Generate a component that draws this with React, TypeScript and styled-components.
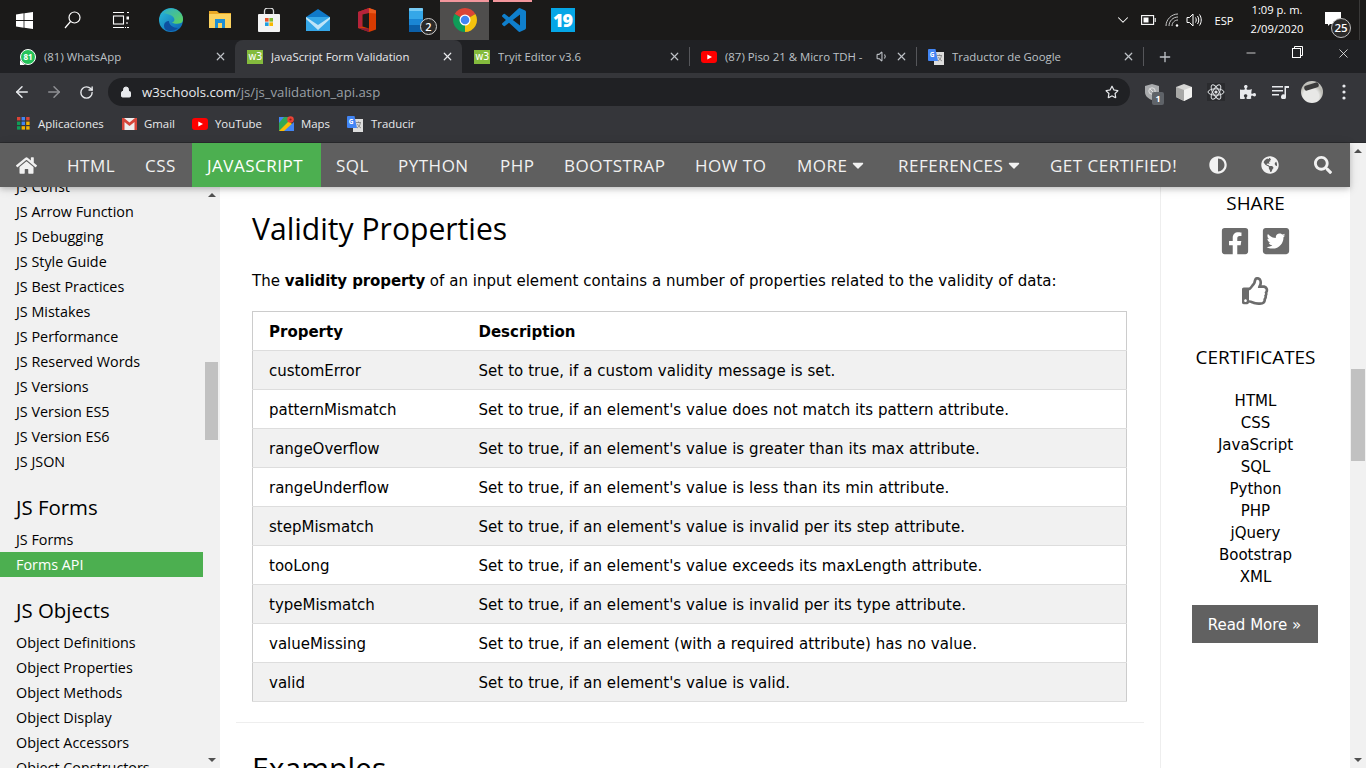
import React from 'react';
import styled, { createGlobalStyle } from 'styled-components';
import { FaHome, FaCaretDown, FaAdjust, FaGlobeAmericas, FaSearch, FaFacebookSquare, FaTwitterSquare, FaRegThumbsUp, FaPuzzlePiece, FaRegStar } from 'react-icons/fa';
import { ArrowLeft, ArrowRight, RotateCw, Lock, X, Plus, Minus, ChevronDown, Volume1 } from 'lucide-react';

const UI = '"Open Sans", "Noto Sans", sans-serif';
const VERD = '"DejaVu Sans", Verdana, sans-serif';

const Global = createGlobalStyle`
  html, body { margin: 0; padding: 0; background: #fff; overflow: hidden; }
  #root { width: 1366px; height: 768px; overflow: hidden; }
  * { box-sizing: border-box; }
`;

const Screen = styled.div`
  width: 1366px; height: 768px; display: flex; flex-direction: column; overflow: hidden; font-family: ${UI};
`;

/* ---------- taskbar ---------- */
const Taskbar = styled.div`
  height: 40px; flex: none; display: flex; align-items: stretch; background: #1b1a19; color: #fff;
`;
const SysButton = styled.div`
  width: 48px; display: flex; align-items: center; justify-content: center;
`;
const Spacer = styled.div<{ $w: number }>`
  width: ${p => p.$w}px; flex: none;
`;
const Grow = styled.div`
  flex: 1;
`;
const AppButton = styled.div<{ $active?: boolean; $running?: boolean }>`
  width: 49px; position: relative; display: flex; align-items: center; justify-content: center;
  background: ${p => (p.$active ? '#4f4e4d' : 'transparent')};
  &::before {
    content: ''; position: absolute; top: 0; height: 2px; background: #f2969c;
    left: ${p => (p.$active ? '0' : '4px')}; right: ${p => (p.$active ? '0' : '6px')};
    display: ${p => (p.$running ? 'block' : 'none')};
  }
`;
const CountBadge = styled.span`
  position: absolute; left: 29px; top: 18px; width: 17px; height: 17px; border-radius: 50%;
  background: #2b2a29; border: 1px solid #cfcfcf; color: #fff; font: 600 11px/15px ${UI}; text-align: center;
`;
const Tray = styled.div`
  display: flex; align-items: center; color: #fff; height: 40px; padding-right: 6px;
`;
const TrayIcon = styled.div<{ $w: number }>`
  width: ${p => p.$w}px; display: flex; justify-content: center; align-items: center; height: 40px;
`;
const TrayLang = styled.div`
  width: 36px; padding-left: 4px; text-align: center; font-size: 11.2px; color: #fff;
`;
const Clock = styled.div`
  width: 74px; text-align: center; font-size: 11.2px; line-height: 19px; color: #fff; padding-bottom: 2px;
`;
const Notif = styled.div`
  width: 46px; height: 40px; position: relative; border-right: 1px solid #3a3938;
  display: flex; align-items: flex-start; justify-content: flex-start;
`;
const NotifGlyph = styled.svg`
  margin: 12px 0 0 11px;
`;
const NotifBadge = styled.span`
  position: absolute; left: 17px; top: 18px; width: 20px; height: 20px; border-radius: 50%;
  background: #2b2a29; border: 1px solid #bdbdbd; color: #fff; font: 600 11.5px/18px ${UI}; text-align: center;
`;

/* ---------- tabs ---------- */
const TabStrip = styled.div`
  height: 33px; flex: none; background: #202124; display: flex; align-items: stretch; padding-left: 8px;
`;
const Tab = styled.div<{ $active?: boolean; $sep?: boolean }>`
  width: 227px; flex: none; position: relative; display: flex; align-items: center; padding: 0 8px 0 12px;
  background: ${p => (p.$active ? '#35363a' : 'transparent')};
  border-radius: 8px 8px 0 0;
  color: ${p => (p.$active ? '#e8eaed' : '#bdc1c6')};
  &::before {
    content: ''; position: absolute; left: 0; top: 7px; height: 19px; width: 1px; background: #55565a;
    display: ${p => (p.$sep ? 'block' : 'none')};
  }
`;
const TabIconSlot = styled.div`
  width: 16px; height: 16px; flex: none; display: flex; align-items: center; justify-content: center; position: relative;
`;
const TabTitle = styled.div`
  flex: 1; margin-left: 8px; font-size: 11.4px; white-space: nowrap; overflow: hidden;
`;
const W3Icon = styled.div`
  width: 16px; height: 14px; background: #84bb3d; color: #fff; font: 400 10px/13px ${VERD}; text-align: center; letter-spacing: -.5px;
`;
const WaIcon = styled.div`
  width: 16px; height: 16px; border-radius: 50%; background: #25c35a; color: #fff; border: 1px solid #fff;
  font: 700 8px/14px ${UI}; text-align: center; position: relative;
  &::after {
    content: ''; position: absolute; left: -1px; bottom: -1px; width: 0; height: 0;
    border-left: 5px solid #fff; border-top: 5px solid transparent;
  }
`;
const NewTab = styled.div`
  width: 44px; position: relative; display: flex; align-items: center; justify-content: center; color: #bdc1c6;
  &::before { content: ''; position: absolute; left: 0; top: 7px; height: 19px; width: 1px; background: #55565a; }
`;
const WinBtn = styled.div`
  width: 46px; height: 33px; display: flex; align-items: flex-start; padding-top: 6px; justify-content: center; color: #fff;
`;

/* ---------- toolbar ---------- */
const Toolbar = styled.div`
  height: 37px; flex: none; background: #35363a; display: flex; align-items: center; padding: 1px 0 0 6px;
`;
const NavBtn = styled.div<{ $dim?: boolean }>`
  width: 32px; height: 28px; display: flex; align-items: center; justify-content: center;
  color: ${p => (p.$dim ? '#8f9094' : '#e8eaed')};
`;
const Omnibox = styled.div`
  margin-left: 6px; width: 1022px; height: 28px; border-radius: 14px; background: #202124;
  display: flex; align-items: center; padding: 0 11px 0 12px; color: #e8eaed;
`;
const UrlText = styled.div`
  flex: 1; margin-left: 10px; font-size: 13.2px; color: #9aa0a6; white-space: nowrap;
  b { font-weight: 400; color: #e8eaed; }
`;
const ExtBtn = styled.div<{ $w: number }>`
  width: ${p => p.$w}px; height: 28px; position: relative; display: flex; align-items: center; justify-content: center; color: #e8eaed;
`;
const ExtBadge = styled.span`
  position: absolute; left: 16px; top: 14px; width: 12px; height: 13px; border-radius: 2px; background: #5f6368; color: #fff;
  font: 700 9px/13px ${UI}; text-align: center;
`;
const Avatar = styled.div`
  width: 22px; height: 22px; border-radius: 50%;
  background: radial-gradient(circle at 45% 70%, #e8e8e6 0 40%, #b9b9b2 60%, #dededc 100%);
  position: relative; overflow: hidden;
  &::after { content: ''; position: absolute; left: 3px; top: 3px; width: 15px; height: 5px; background: #3b3b3b; transform: rotate(-18deg); border-radius: 2px; }
`;

/* ---------- bookmarks ---------- */
const Bookmarks = styled.div`
  height: 33px; flex: none; background: #35363a; display: flex; align-items: center; padding: 0 0 5px 15px; border-bottom: 1px solid #2a2b2e;
`;
const Bookmark = styled.div<{ $w: number }>`
  width: ${p => p.$w}px; flex: none; display: flex; align-items: center; color: #e8eaed; font-size: 11.4px; white-space: nowrap;
`;
const BookIcon = styled.div`
  width: 16px; height: 16px; margin-right: 7px; flex: none; display: flex; align-items: center; justify-content: center;
`;
const TightBookIcon = styled(BookIcon)`
  margin-right: 8px;
`;

/* ---------- page ---------- */
const PageRow = styled.div`
  flex: 1; min-height: 0; display: flex; align-items: stretch;
`;
const PageCol = styled.div`
  width: 1350px; flex: none; display: flex; flex-direction: column; min-height: 0;
`;
const NavBar = styled.nav`
  height: 44px; flex: none; display: flex; align-items: stretch; background: #5f5f5f; color: #f1f1f1;
  position: relative; z-index: 2; box-shadow: 0 2px 5px rgba(0,0,0,.16), 0 2px 10px rgba(0,0,0,.12);
`;
const NavItem = styled.div<{ $w: number; $pad: number; $active?: boolean }>`
  width: ${p => p.$w}px; flex: none; display: flex; align-items: center; gap: 2px; padding-left: ${p => p.$pad}px;
  font-size: 17px; letter-spacing: .5px; white-space: nowrap;
  background: ${p => (p.$active ? '#4caf50' : 'transparent')};
  color: ${p => (p.$active ? '#fff' : '#f1f1f1')};
`;
const Body = styled.div`
  flex: 1; min-height: 0; display: flex; align-items: stretch; overflow: hidden;
`;
const Sidebar = styled.aside`
  width: 220px; flex: none; background: #f1f1f1; display: flex; overflow: hidden;
`;
const SideList = styled.div`
  width: 203px; flex: none; margin-top: -13px;
`;
const SideItem = styled.div<{ $active?: boolean }>`
  height: 25px; line-height: 25px; padding-left: 16px; font-size: 14.35px; white-space: nowrap;
  color: ${p => (p.$active ? '#fff' : '#000')};
  background: ${p => (p.$active ? '#4caf50' : 'transparent')};
`;
const SideHead = styled.h2`
  margin: 0; padding: 19px 0 0 16px; height: 53px; font-weight: 400; font-size: 20.4px; line-height: 29px; color: #000;
`;
const SideHeadSecond = styled(SideHead)`
  height: 44px; padding-top: 10px; margin-top: 9px;
`;
const Track = styled.div<{ $w: number }>`
  width: ${p => p.$w}px; flex: none; background: #f1f1f1; display: flex; flex-direction: column; align-items: center;
`;
const ArrowUp = styled.div`
  width: 0; height: 0; margin-top: 6px; border: 4px solid transparent; border-top: 0; border-bottom: 4px solid #505050;
`;
const ArrowDown = styled.div`
  width: 0; height: 0; margin-top: auto; margin-bottom: 6px; border: 4px solid transparent; border-bottom: 0; border-top: 4px solid #505050;
`;
const Thumb = styled.div<{ $top: number; $h: number; $w: number }>`
  width: ${p => p.$w}px; height: ${p => p.$h}px; margin-top: ${p => p.$top}px; background: #c1c1c1;
`;

const Main = styled.main`
  width: 940px; flex: none; background: #fff; padding: 0 16px;
`;
const Inner = styled.div`
  padding: 0 16px;
`;
const H1 = styled.h2`
  margin: 0; padding-top: 21px; font-weight: 400; font-size: 30.1px; line-height: 42px; color: #000;
`;
const Para = styled.p`
  margin: 20px 0 0; font: 15px/22px ${VERD}; letter-spacing: .04px; color: #000; white-space: nowrap;
  b { font-weight: 700; letter-spacing: -.1px; }
`;
const Table = styled.table`
  margin-top: 19px; width: 875px; border-collapse: collapse; border: 1px solid #ccc; font: 15px/23px ${VERD}; color: #000; table-layout: fixed;
`;
const Row = styled.tr<{ $alt?: boolean }>`
  height: 39px; background: ${p => (p.$alt ? '#f1f1f1' : '#fff')}; border-bottom: 1px solid #ddd;
`;
const Th = styled.th`
  text-align: left; padding: 3px 16px 0; font-weight: 700;
`;
const Td = styled.td`
  padding: 3px 16px 0; white-space: nowrap;
`;
const DescTd = styled(Td)`
  letter-spacing: .06px;
`;
const Rule = styled.hr`
  margin: 20px 0 0; border: 0; border-top: 1px solid #eee;
`;
const H1Next = styled(H1)`
  padding-top: 25px;
`;

const Aside = styled.aside`
  width: 190px; flex: none; background: #fff; border-left: 1px solid #eee; display: flex; flex-direction: column; align-items: center; color: #000;
`;
const AsideHead = styled.div<{ $top: number }>`
  margin-top: ${p => p.$top}px; font-size: 18.9px; line-height: 28px;
`;
const ShareRow = styled.div`
  margin-top: 11px; display: flex; gap: 11px; color: #6c6c6c; height: 26px; align-items: center;
`;
const Like = styled.div`
  margin-top: 22px; color: #6c6c6c; height: 30px; display: flex; align-items: center;
`;
const CertList = styled.div`
  margin-top: 19px; text-align: center; font: 15px/22px ${VERD};
`;
const ReadMore = styled.div`
  margin: 17px 2px 0 0; width: 126px; height: 38px; padding-top: 1px; background: #616161; color: #fff; font: 15px/38px ${VERD}; text-align: center; white-space: nowrap;
`;

/* ---------- drawn icons ---------- */
const WinLogo = () => (
  <svg width="17" height="17" viewBox="0 0 17 17" fill="#fff">
    <path d="M0 2.4 7.6 1.3V8H0zM8.4 1.2 17 0v8H8.4zM0 9h7.6v6.7L0 14.6zM8.4 9H17v8l-8.6-1.2z" />
  </svg>
);
const SearchGlyph = () => (
  <svg width="17" height="18" viewBox="0 0 17 18" fill="none" stroke="#fff" strokeWidth="1.2">
    <circle cx="10.5" cy="6.5" r="5.5" /><path d="M6.5 10.5 1 17" />
  </svg>
);
const TaskView = () => (
  <svg width="17" height="16" viewBox="0 0 17 16" fill="none" stroke="#fff" strokeWidth="1.1">
    <path d="M1 .5h11M1 15.5h11M13 15.5h1" /><rect x="1.5" y="4" width="10" height="8" />
    <rect x="14.5" y="4.5" width="2.5" height="3" fill="#fff" stroke="none" /><path d="M15 .5h2M15 10v2M15 15.5h2" />
  </svg>
);
const EdgeLogo = () => (
  <svg width="24" height="24" viewBox="0 0 24 24">
    <defs>
      <linearGradient id="edgeA" x1="0" y1="0" x2="1" y2="1"><stop offset="0" stopColor="#2cc0d8" /><stop offset="1" stopColor="#0a5fb4" /></linearGradient>
      <linearGradient id="edgeB" x1="0" y1="0" x2="1" y2="1"><stop offset="0" stopColor="#2fb0c8" /><stop offset="1" stopColor="#5fd35a" /></linearGradient>
    </defs>
    <circle cx="12" cy="12" r="12" fill="url(#edgeA)" />
    <path d="M4 5C8 -1 19-1 23 7c1.6 3 1.3 7-1 8-3 1.3-7 .8-9-.5 2-.5 3-2 2-4.5C13 6.5 7 5.5 4 5z" fill="url(#edgeB)" />
    <path d="M10 13c0 4 4 7 9 7-3 3-8 4-12 2C4 20 4 13 10 13z" fill="#0d4f9f" />
  </svg>
);
const FolderLogo = () => (
  <svg width="22" height="20" viewBox="0 0 22 20">
    <path d="M0 1h8l2 2h12v15H0z" fill="#e9a825" /><rect y="4" width="22" height="14" fill="#fbd25f" />
    <rect x="6" y="9" width="10" height="9" fill="#1d8fd4" /><rect x="9" y="13" width="4" height="5" fill="#fbd25f" />
  </svg>
);
const StoreLogo = () => (
  <svg width="22" height="24" viewBox="0 0 22 24">
    <path d="M6.5 6V3a3 3 0 0 1 3-3h3a3 3 0 0 1 3 3v3" fill="none" stroke="#ddd" strokeWidth="1.3" />
    <rect y="6" width="22" height="18" rx="1" fill="#f3f3f3" />
    <rect x="7" y="10" width="3.6" height="3.6" fill="#e8542a" /><rect x="11.4" y="10" width="3.6" height="3.6" fill="#7cb82f" />
    <rect x="7" y="14.4" width="3.6" height="3.6" fill="#1f9fe0" /><rect x="11.4" y="14.4" width="3.6" height="3.6" fill="#f6b800" />
  </svg>
);
const MailLogo = () => (
  <svg width="24" height="22" viewBox="0 0 24 22">
    <path d="M0 8 12 0l12 8v14H0z" fill="#0f79c9" /><path d="M0 8h24v14H0z" fill="#35a7e8" />
    <path d="M0 8l12 8 12-8v2l-12 11L0 10z" fill="#bfe4f8" />
  </svg>
);
const OfficeLogo = () => (
  <svg width="18" height="24" viewBox="0 0 18 24">
    <path d="M11 0l7 2.5v19L11 24 0 20V4z" fill="#d83b01" />
    <path d="M11 0 0 4v16l4.5-1.5V6.5L11 5z" fill="#b5233b" />
    <path d="M11 24 0 20l11 .5z" fill="#8a1c3a" />
    <path d="M11 0l7 2.5v3L11 5z" fill="#eb5a1d" />
    <path d="M4.5 6.5 11 5v15.5l-6.5-2z" fill="#1b1a19" />
  </svg>
);
const PhoneLogo = () => (
  <svg width="14" height="24" viewBox="0 0 14 24">
    <rect width="14" height="24" rx="1.5" fill="#35a7e8" /><rect y="11" width="14" height="6" fill="#1a86d4" /><rect y="17" width="14" height="7" fill="#0b5fa8" />
    <rect y="0" width="14" height="3" rx="1" fill="#77cbf5" />
  </svg>
);
const polar = (deg: number, r: number) => {
  const a = (deg * Math.PI) / 180;
  return `${(12 + r * Math.cos(a)).toFixed(2)} ${(12 + r * Math.sin(a)).toFixed(2)}`;
};
const ChromeLogo = () => (
  <svg width="24" height="24" viewBox="0 0 24 24">
    <path d={`M12 12L${polar(210, 12)}A12 12 0 0 1 ${polar(330, 12)}Z`} fill="#db4437" />
    <path d={`M12 12L${polar(330, 12)}A12 12 0 0 1 ${polar(90, 12)}Z`} fill="#f4c20d" />
    <path d={`M12 12L${polar(90, 12)}A12 12 0 0 1 ${polar(210, 12)}Z`} fill="#0f9d58" />
    <circle cx="12" cy="12" r="5.5" fill="#fff" /><circle cx="12" cy="12" r="4.3" fill="#4285f4" />
  </svg>
);
const VsCode = () => (
  <svg width="24" height="24" viewBox="0 0 24 24" fill="#0f7fcc">
    <path d="M23.15 2.587L18.21.21a1.494 1.494 0 0 0-1.705.29l-9.46 8.63-4.12-3.128a.999.999 0 0 0-1.276.057L.327 7.261A1 1 0 0 0 .326 8.74L3.899 12 .326 15.26a1 1 0 0 0 .001 1.479L1.65 17.94a.999.999 0 0 0 1.276.057l4.12-3.128 9.46 8.63a1.492 1.492 0 0 0 1.704.29l4.942-2.377A1.5 1.5 0 0 0 24 20.06V3.939a1.5 1.5 0 0 0-.85-1.352zm-5.146 14.861L10.826 12l7.178-5.448v10.896z" />
  </svg>
);
const Nineteen = styled.div`
  width: 24px; height: 24px; background: #05a6e6; color: #fff; font: 800 18px/24px "Open Sans", sans-serif; text-align: center; letter-spacing: -1px;
`;
const Battery = () => (
  <svg width="15" height="10" viewBox="0 0 15 10" fill="none" stroke="#fff" strokeWidth="1.1">
    <rect x=".6" y=".6" width="12" height="8.8" /><rect x="2.5" y="2.5" width="5" height="5" fill="#fff" stroke="none" /><path d="M14.2 3v4" />
  </svg>
);
const Wifi = () => (
  <svg width="14" height="14" viewBox="0 0 14 14" fill="none" stroke="#c9c9c9" strokeWidth="1">
    <path d="M1 13C1 6.5 6.5 1 13 1M4 13c0-5 4-9 9-9M7 13c0-3.3 2.7-6 6-6" /><circle cx="12" cy="12.5" r="1.2" fill="#fff" stroke="none" />
  </svg>
);
const Speaker = () => (
  <svg width="16" height="14" viewBox="0 0 16 14" fill="none" stroke="#fff" strokeWidth="1">
    <path d="M1 4.5h2.5L7 1v12L3.5 9.5H1zM9.5 4.5c1 1.5 1 3.5 0 5M11.5 3c1.7 2.5 1.7 5.5 0 8M13.5 1.5c2.3 3.3 2.3 7.7 0 11" />
  </svg>
);
const GTranslate = () => (
  <svg width="16" height="16" viewBox="0 0 16 16">
    <rect x="6" y="3" width="10" height="13" fill="#ddd" />
    <path d="M0 1a1 1 0 0 1 1-1h6.5L10 12H1a1 1 0 0 1-1-1z" fill="#4285f4" />
    <path d="M9 6.5h5M11.5 5.5v1M10 12c2-1 3-3 3.3-5M10.5 8c.8 2 2 3 3.5 4" stroke="#777" strokeWidth=".8" fill="none" />
    <text x="1.8" y="8" fontSize="6.5" fontWeight="700" fill="#fff" fontFamily="Open Sans, sans-serif">G</text>
  </svg>
);
const YtIcon = () => (
  <svg width="16" height="12" viewBox="0 0 16 12">
    <rect width="16" height="12" rx="3" fill="#f00" /><path d="M6.3 3.5 11 6 6.3 8.5z" fill="#fff" />
  </svg>
);
const AppsGrid = () => {
  const colors = ['#db4437', '#4285f4', '#db4437', '#0f9d58', '#4285f4', '#f4b400', '#0f9d58', '#f4b400', '#f4b400'];
  return (
    <svg width="13" height="13" viewBox="0 0 13 13">
      {colors.map((c, i) => <rect key={i} x={(i % 3) * 4.6} y={Math.floor(i / 3) * 4.6} width="3.4" height="3.4" fill={c} />)}
    </svg>
  );
};
const GmailIcon = () => (
  <svg width="15" height="12" viewBox="0 0 15 12">
    <rect width="15" height="12" fill="#eee" /><path d="M0 0h2l5.5 4.5L13 0h2v12h-2.500V4L7.500 8 2.500 4v8H0z" fill="#d6463a" />
  </svg>
);
const MapsIcon = () => (
  <svg width="15" height="15" viewBox="0 0 15 15">
    <path d="M0 1h10v14H0z" fill="#34a853" /><path d="M0 15 10 5l5 5v5z" fill="#fbbc04" /><path d="M0 1h5L0 7z" fill="#4285f4" /><path d="M5 15 15 6v9z" fill="#4285f4" />
    <circle cx="11.5" cy="3.5" r="3.3" fill="#ea4335" /><circle cx="11.5" cy="3.5" r="1.1" fill="#8c1d18" />
  </svg>
);
const ShieldExt = () => (
  <svg width="14" height="16" viewBox="0 0 14 16">
    <path d="M7 0l7 2v6c0 4-3 6.5-7 8-4-1.5-7-4-7-8V2z" fill="#a9abad" />
    <circle cx="7" cy="7" r="3.2" fill="none" stroke="#e0e0e0" strokeWidth="1" /><path d="M4.8 4.8 9.2 9.2" stroke="#e0e0e0" strokeWidth="1" />
  </svg>
);
const CubeExt = () => (
  <svg width="16" height="17" viewBox="0 0 16 17">
    <path d="M8 0l8 3v10l-8 4-8-4V3z" fill="#d6d6d4" /><path d="M8 6l8-3v10l-8 4z" fill="#f1f1ef" /><path d="M0 3l8 3v11l-8-4z" fill="#a8a8a6" />
  </svg>
);
const ReactExt = () => (
  <svg width="18" height="18" viewBox="0 0 18 18" fill="none" stroke="#dfe2e5" strokeWidth="1">
    <rect width="18" height="18" fill="#2a2b2e" stroke="none" />
    <ellipse cx="9" cy="9" rx="8" ry="3.2" /><ellipse cx="9" cy="9" rx="8" ry="3.2" transform="rotate(60 9 9)" /><ellipse cx="9" cy="9" rx="8" ry="3.2" transform="rotate(120 9 9)" />
    <circle cx="9" cy="9" r="1.6" fill="#dfe2e5" stroke="none" />
  </svg>
);
const QueueMusic = () => (
  <svg width="17" height="14" viewBox="0 0 17 14" fill="#e8eaed">
    <path d="M0 1h11v1.5H0zM0 5h11v1.5H0zM0 9h7v1.5H0z" /><path d="M12.5 1H17v2h-3v8.5A2.5 2.5 0 1 1 12.5 9.5z" />
  </svg>
);
const Dots = () => (
  <svg width="4" height="16" viewBox="0 0 4 16" fill="#e8eaed"><circle cx="2" cy="2" r="1.6" /><circle cx="2" cy="8" r="1.6" /><circle cx="2" cy="14" r="1.6" /></svg>
);
const Restore = () => (
  <svg width="11" height="12" viewBox="0 0 11 12" fill="none" stroke="#fff" strokeWidth="1"><rect x=".5" y="2.5" width="8" height="9" /><path d="M2.5 2.5V.5h8v9h-2" /></svg>
);

const Word = styled.span``;

const bookmarks = [
  { w: 106, icon: <AppsGrid />, label: 'Aplicaciones', tight: false },
  { w: 71, icon: <GmailIcon />, label: 'Gmail', tight: false },
  { w: 86, icon: <YtIcon />, label: 'YouTube', tight: false },
  { w: 69, icon: <MapsIcon />, label: 'Maps', tight: false },
  { w: 90, icon: <GTranslate />, label: 'Traducir', tight: true },
];

const sideTop = ['JS Const', 'JS Arrow Function', 'JS Debugging', 'JS Style Guide', 'JS Best Practices', 'JS Mistakes', 'JS Performance', 'JS Reserved Words', 'JS Versions', 'JS Version ES5', 'JS Version ES6', 'JS JSON'];
const sideObjects = ['Object Definitions', 'Object Properties', 'Object Methods', 'Object Display', 'Object Accessors', 'Object Constructors'];

const navItems: { w: number; pad: number; label: React.ReactNode; active?: boolean }[] = [
  { w: 52, pad: 16, label: <FaHome size={21} /> },
  { w: 78, pad: 15, label: 'HTML' },
  { w: 62, pad: 15, label: 'CSS' },
  { w: 129, pad: 15, label: 'JAVASCRIPT', active: true },
  { w: 62, pad: 15, label: 'SQL' },
  { w: 102, pad: 15, label: 'PYTHON' },
  { w: 64, pad: 15, label: 'PHP' },
  { w: 131, pad: 15, label: 'BOOTSTRAP' },
  { w: 102, pad: 15, label: 'HOW TO' },
  { w: 101, pad: 15, label: <><Word>MORE</Word><FaCaretDown size={18} /></> },
  { w: 152, pad: 15, label: <><Word>REFERENCES</Word><FaCaretDown size={18} /></> },
  { w: 158, pad: 15, label: 'GET CERTIFIED!' },
  { w: 51, pad: 16, label: <FaAdjust size={18} /> },
  { w: 53, pad: 17, label: <FaGlobeAmericas size={18} /> },
  { w: 53, pad: 17, label: <FaSearch size={18} /> },
];

const rows = [
  ['customError', 'Set to true, if a custom validity message is set.'],
  ['patternMismatch', "Set to true, if an element's value does not match its pattern attribute."],
  ['rangeOverflow', "Set to true, if an element's value is greater than its max attribute."],
  ['rangeUnderflow', "Set to true, if an element's value is less than its min attribute."],
  ['stepMismatch', "Set to true, if an element's value is invalid per its step attribute."],
  ['tooLong', "Set to true, if an element's value exceeds its maxLength attribute."],
  ['typeMismatch', "Set to true, if an element's value is invalid per its type attribute."],
  ['valueMissing', 'Set to true, if an element (with a required attribute) has no value.'],
  ['valid', "Set to true, if an element's value is valid."],
];

const certs = ['HTML', 'CSS', 'JavaScript', 'SQL', 'Python', 'PHP', 'jQuery', 'Bootstrap', 'XML'];

const TabClose = () => <X size={13} strokeWidth={2.2} color="#bdc1c6" />;

export default function App() {
  return (
    <Screen>
      <Global />
      <Taskbar>
        <SysButton><WinLogo /></SysButton>
        <SysButton><SearchGlyph /></SysButton>
        <SysButton><TaskView /></SysButton>
        <Spacer $w={2} />
        <AppButton><EdgeLogo /></AppButton>
        <AppButton><FolderLogo /></AppButton>
        <AppButton><StoreLogo /></AppButton>
        <AppButton><MailLogo /></AppButton>
        <AppButton><OfficeLogo /></AppButton>
        <AppButton><PhoneLogo /><CountBadge>2</CountBadge></AppButton>
        <AppButton $active $running><ChromeLogo /></AppButton>
        <AppButton $running><VsCode /></AppButton>
        <AppButton><Nineteen>19</Nineteen></AppButton>
        <Grow />
        <Tray>
          <TrayIcon $w={26}><ChevronDown size={18} strokeWidth={1.4} /></TrayIcon>
          <TrayIcon $w={24}><Battery /></TrayIcon>
          <TrayIcon $w={24}><Wifi /></TrayIcon>
          <TrayIcon $w={20}><Speaker /></TrayIcon>
          <TrayLang>ESP</TrayLang>
          <Clock>1:09 p. m.<br />2/09/2020</Clock>
          <Notif>
            <NotifGlyph width="16" height="14" viewBox="0 0 16 14" fill="#fff"><path d="M0 0h16v12H5l-2 2v-2H0z" /></NotifGlyph>
            <NotifBadge>25</NotifBadge>
          </Notif>
        </Tray>
      </Taskbar>

      <TabStrip>
        <Tab>
          <TabIconSlot><WaIcon>81</WaIcon></TabIconSlot>
          <TabTitle>(81) WhatsApp</TabTitle>
          <TabClose />
        </Tab>
        <Tab $active>
          <TabIconSlot><W3Icon>w3</W3Icon></TabIconSlot>
          <TabTitle>JavaScript Form Validation</TabTitle>
          <X size={13} strokeWidth={2.2} color="#e8eaed" />
        </Tab>
        <Tab>
          <TabIconSlot><W3Icon>w3</W3Icon></TabIconSlot>
          <TabTitle>Tryit Editor v3.6</TabTitle>
          <TabClose />
        </Tab>
        <Tab $sep>
          <TabIconSlot><YtIcon /></TabIconSlot>
          <TabTitle>(87) Piso 21 &amp; Micro TDH -</TabTitle>
          <Volume1 size={13} color="#bdc1c6" />
          <Spacer $w={6} />
          <TabClose />
        </Tab>
        <Tab $sep>
          <TabIconSlot><GTranslate /></TabIconSlot>
          <TabTitle>Traductor de Google</TabTitle>
          <TabClose />
        </Tab>
        <NewTab><Plus size={16} strokeWidth={2} /></NewTab>
        <Grow />
        <WinBtn><Minus size={14} strokeWidth={1.3} /></WinBtn>
        <WinBtn><Restore /></WinBtn>
        <WinBtn><X size={15} strokeWidth={1.2} /></WinBtn>
      </TabStrip>

      <Toolbar>
        <NavBtn><ArrowLeft size={18} strokeWidth={2} /></NavBtn>
        <NavBtn $dim><ArrowRight size={18} strokeWidth={2} /></NavBtn>
        <NavBtn><RotateCw size={15} strokeWidth={2.2} /></NavBtn>
        <Omnibox>
          <Lock size={12} fill="#e8eaed" strokeWidth={2} />
          <UrlText><b>w3schools.com</b>/js/js_validation_api.asp</UrlText>
          <FaRegStar size={14} />
        </Omnibox>
        <Spacer $w={6} />
        <ExtBtn $w={32}><ShieldExt /><ExtBadge>1</ExtBadge></ExtBtn>
        <ExtBtn $w={32}><CubeExt /></ExtBtn>
        <ExtBtn $w={32}><ReactExt /></ExtBtn>
        <ExtBtn $w={32}><FaPuzzlePiece size={16} /></ExtBtn>
        <ExtBtn $w={32}><QueueMusic /></ExtBtn>
        <ExtBtn $w={32}><Avatar /></ExtBtn>
        <ExtBtn $w={32}><Dots /></ExtBtn>
      </Toolbar>

      <Bookmarks>
        {bookmarks.map(b => (
          <Bookmark key={b.label} $w={b.w}>
            {b.tight ? <TightBookIcon>{b.icon}</TightBookIcon> : <BookIcon>{b.icon}</BookIcon>}
            {b.label}
          </Bookmark>
        ))}
      </Bookmarks>

      <PageRow>
        <PageCol>
          <NavBar>
            {navItems.map((n, i) => (
              <NavItem key={i} $w={n.w} $pad={n.pad} $active={n.active}>{n.label}</NavItem>
            ))}
          </NavBar>
          <Body>
            <Sidebar>
              <SideList>
                {sideTop.map(s => <SideItem key={s}>{s}</SideItem>)}
                <SideHead>JS Forms</SideHead>
                <SideItem>JS Forms</SideItem>
                <SideItem $active>Forms API</SideItem>
                <SideHeadSecond>JS Objects</SideHeadSecond>
                {sideObjects.map(s => <SideItem key={s}>{s}</SideItem>)}
              </SideList>
              <Track $w={17}>
                <ArrowUp />
                <Thumb $w={13} $h={78} $top={165} />
                <ArrowDown />
              </Track>
            </Sidebar>
            <Main>
              <Inner>
                <H1>Validity Properties</H1>
                <Para>The <b>validity property</b> of an input element contains a number of properties related to the validity of data:</Para>
                <Table>
                  <colgroup><col width="210" /><col /></colgroup>
                  <tbody>
                    <Row><Th>Property</Th><Th>Description</Th></Row>
                    {rows.map((r, i) => (
                      <Row key={r[0]} $alt={i % 2 === 0}><Td>{r[0]}</Td><DescTd>{r[1]}</DescTd></Row>
                    ))}
                  </tbody>
                </Table>
              </Inner>
              <Rule />
              <Inner>
                <H1Next>Examples</H1Next>
              </Inner>
            </Main>
            <Aside>
              <AsideHead $top={2}>SHARE</AsideHead>
              <ShareRow>
                <FaFacebookSquare size={30} />
                <FaTwitterSquare size={30} />
              </ShareRow>
              <Like><FaRegThumbsUp size={28} /></Like>
              <AsideHead $top={37}>CERTIFICATES</AsideHead>
              <CertList>
                {certs.map(c => <div key={c}>{c}</div>)}
              </CertList>
              <ReadMore>Read More »</ReadMore>
            </Aside>
          </Body>
        </PageCol>
        <Track $w={16}>
          <ArrowUp />
          <Thumb $w={14} $h={92} $top={216} />
          <ArrowDown />
        </Track>
      </PageRow>
    </Screen>
  );
}
